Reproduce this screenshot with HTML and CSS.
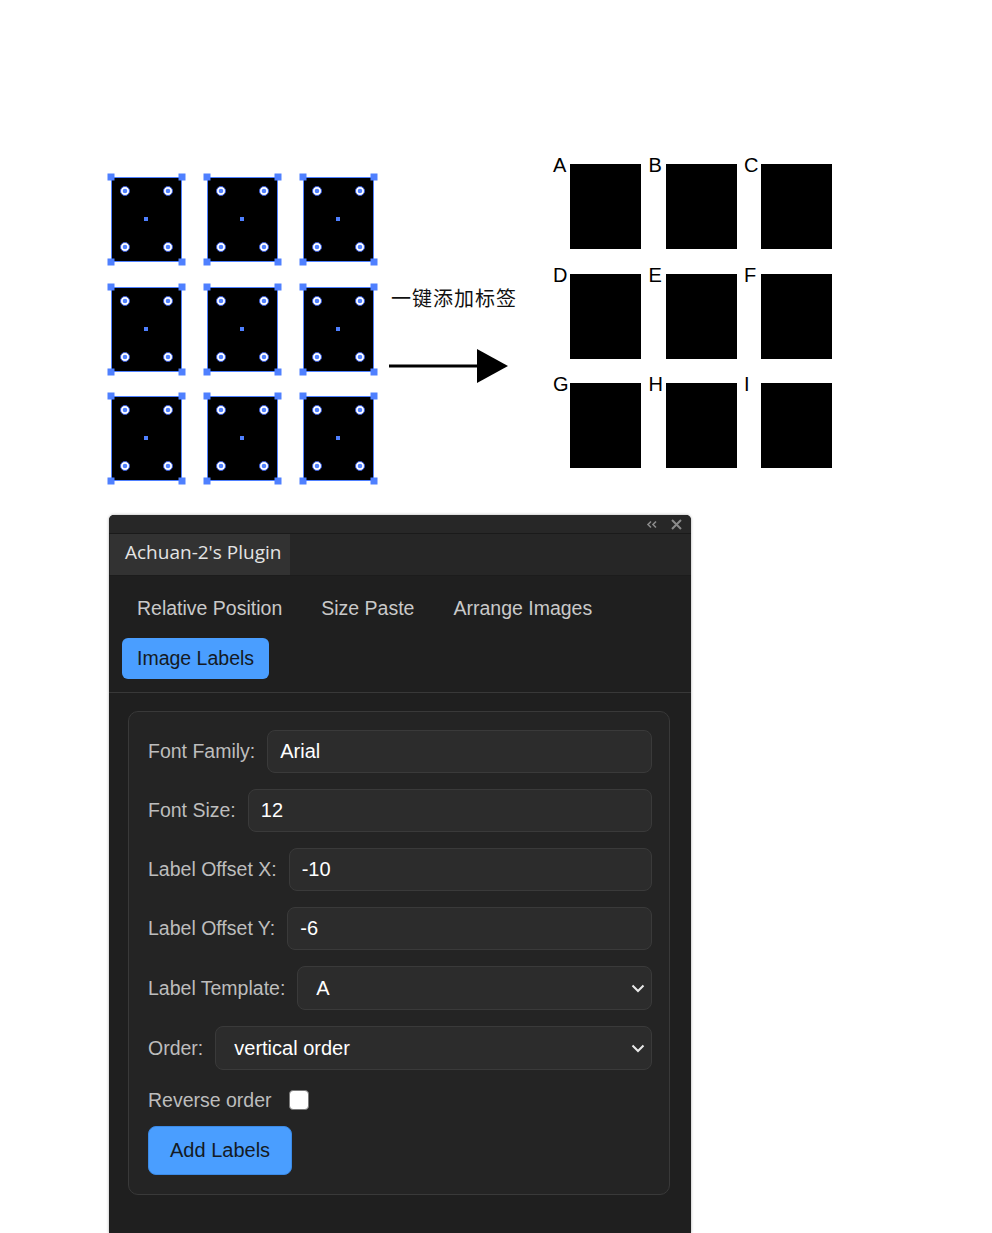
FILE: index.html
```html
<!DOCTYPE html>
<html lang="en">
<head>
<meta charset="utf-8">
<title>Achuan-2's Plugin – Image Labels</title>
<link rel="stylesheet" href="styles.css">
</head>
<body>
<svg class="defs" width="0" height="0" aria-hidden="true">
  <defs>
    <g id="selItem">
      <rect x="0.5" y="0.5" width="70" height="84" fill="#000" stroke="#4f80ff" stroke-width="1"/>
      <rect x="-3.5" y="-3.5" width="7" height="7" fill="#4f80ff"/>
      <rect x="67.5" y="-3.5" width="7" height="7" fill="#4f80ff"/>
      <rect x="-3.5" y="81.5" width="7" height="7" fill="#4f80ff"/>
      <rect x="67.5" y="81.5" width="7" height="7" fill="#4f80ff"/>
      <circle cx="14" cy="14" r="4.5" fill="#fff" stroke="#3557d6" stroke-width="1"/>
      <circle cx="57" cy="14" r="4.5" fill="#fff" stroke="#3557d6" stroke-width="1"/>
      <circle cx="14" cy="70" r="4.5" fill="#fff" stroke="#3557d6" stroke-width="1"/>
      <circle cx="57" cy="70" r="4.5" fill="#fff" stroke="#3557d6" stroke-width="1"/>
      <circle cx="14" cy="14" r="2.3" fill="#4f80ff"/>
      <circle cx="57" cy="14" r="2.3" fill="#4f80ff"/>
      <circle cx="14" cy="70" r="2.3" fill="#4f80ff"/>
      <circle cx="57" cy="70" r="2.3" fill="#4f80ff"/>
      <rect x="33" y="40" width="4" height="4" fill="#4f80ff"/>
    </g>
  </defs>
</svg>

<div class="stage">
  <div class="src-grid">
    <svg class="sel" width="71" height="85" viewBox="0 0 71 85"><use href="#selItem"/></svg>
    <svg class="sel" width="71" height="85" viewBox="0 0 71 85"><use href="#selItem"/></svg>
    <svg class="sel" width="71" height="85" viewBox="0 0 71 85"><use href="#selItem"/></svg>
    <svg class="sel" width="71" height="85" viewBox="0 0 71 85"><use href="#selItem"/></svg>
    <svg class="sel" width="71" height="85" viewBox="0 0 71 85"><use href="#selItem"/></svg>
    <svg class="sel" width="71" height="85" viewBox="0 0 71 85"><use href="#selItem"/></svg>
    <svg class="sel" width="71" height="85" viewBox="0 0 71 85"><use href="#selItem"/></svg>
    <svg class="sel" width="71" height="85" viewBox="0 0 71 85"><use href="#selItem"/></svg>
    <svg class="sel" width="71" height="85" viewBox="0 0 71 85"><use href="#selItem"/></svg>
  </div>

  <div class="mid">
    <div class="mid-text">一键添加标签</div>
    <svg class="arrow" width="120" height="36" viewBox="0 0 120 36">
      <rect x="0" y="16.5" width="92" height="3" fill="#000"/>
      <polygon points="88,1 119,18 88,35" fill="#000"/>
    </svg>
  </div>

  <div class="out-grid">
    <div class="cell"><span class="cell-label">A</span></div>
    <div class="cell"><span class="cell-label">B</span></div>
    <div class="cell"><span class="cell-label">C</span></div>
    <div class="cell"><span class="cell-label">D</span></div>
    <div class="cell"><span class="cell-label">E</span></div>
    <div class="cell"><span class="cell-label">F</span></div>
    <div class="cell"><span class="cell-label">G</span></div>
    <div class="cell"><span class="cell-label">H</span></div>
    <div class="cell"><span class="cell-label">I</span></div>
  </div>
</div>

<div class="panel-wrap">
  <div class="panel">
    <div class="titlebar">
      <svg class="tb-icon" width="12" height="9" viewBox="0 0 12 9">
        <path d="M5 1.5 L2 4.5 L5 7.5 M10 1.5 L7 4.5 L10 7.5" fill="none" stroke="#8a8a8a" stroke-width="1.6"/>
      </svg>
      <svg class="tb-icon" width="11" height="11" viewBox="0 0 11 11">
        <path d="M1 1 L10 10 M10 1 L1 10" fill="none" stroke="#8a8a8a" stroke-width="2"/>
      </svg>
    </div>
    <div class="tabbar">
      <div class="tab">Achuan-2's Plugin</div>
    </div>
    <div class="nav">
      <button class="nav-btn">Relative Position</button>
      <button class="nav-btn">Size Paste</button>
      <button class="nav-btn">Arrange Images</button>
      <button class="nav-btn active">Image Labels</button>
    </div>
    <div class="content">
      <div class="card">
        <div class="row">
          <label class="lbl">Font Family:</label>
          <input class="field" type="text" value="Arial">
        </div>
        <div class="row">
          <label class="lbl">Font Size:</label>
          <input class="field" type="text" value="12">
        </div>
        <div class="row">
          <label class="lbl">Label Offset X:</label>
          <input class="field" type="text" value="-10">
        </div>
        <div class="row">
          <label class="lbl">Label Offset Y:</label>
          <input class="field" type="text" value="-6">
        </div>
        <div class="row">
          <label class="lbl">Label Template:</label>
          <div class="select-wrap">
            <select class="field select"><option>A</option></select>
            <svg class="chev" width="14" height="9" viewBox="0 0 14 9"><path d="M1.5 1.5 L7 7 L12.5 1.5" fill="none" stroke="#e8e8e8" stroke-width="2"/></svg>
          </div>
        </div>
        <div class="row">
          <label class="lbl">Order:</label>
          <div class="select-wrap">
            <select class="field select"><option>vertical order</option></select>
            <svg class="chev" width="14" height="9" viewBox="0 0 14 9"><path d="M1.5 1.5 L7 7 L12.5 1.5" fill="none" stroke="#e8e8e8" stroke-width="2"/></svg>
          </div>
        </div>
        <div class="row row-check">
          <label class="lbl">Reverse order</label>
          <input class="check" type="checkbox">
        </div>
        <button class="add-btn">Add Labels</button>
      </div>
    </div>
  </div>
</div>
</body>
</html>
```

FILE: styles.css
```css
html, body {
  margin: 0;
  padding: 0;
}

body {
  height: 1233px;
  overflow: hidden;
  background: #ffffff;
  font-family: "Liberation Sans", Arial, sans-serif;
}

.defs {
  display: block;
  width: 0;
  height: 0;
  overflow: hidden;
}

/* ---------- illustration ---------- */
.stage {
  display: flex;
  align-items: flex-start;
  padding: 164px 0 0 111px;
}

.src-grid {
  display: grid;
  grid-template-columns: repeat(3, 71px);
  grid-auto-rows: 85px;
  column-gap: 25px;
  row-gap: 24.5px;
  margin-top: 13px;
}

.sel {
  display: block;
  overflow: visible;
}

.mid {
  width: 127px;
  margin-left: 15px;
  margin-top: 122px;
}

.mid-text {
  font-family: "Noto Sans CJK SC", sans-serif;
  font-size: 20px;
  line-height: 24px;
  letter-spacing: 1px;
  padding-left: 2px;
  color: #111;
  white-space: nowrap;
}

.arrow {
  display: block;
  margin-top: 38px;
}

.out-grid {
  display: grid;
  grid-template-columns: repeat(3, 71px);
  grid-auto-rows: 85px;
  column-gap: 24.5px;
  row-gap: 24.5px;
  margin-left: 54px;
}

.cell {
  position: relative;
  background: #000;
}

.cell-label {
  position: absolute;
  left: -17px;
  top: -10px;
  font-size: 20px;
  line-height: 23px;
  color: #000;
}

/* ---------- panel ---------- */
.panel-wrap {
  padding: 34px 0 0 109px;
}

.panel {
  width: 582px;
  height: 718px;
  background: #1f1f1f;
  border-radius: 5px 5px 0 0;
  box-shadow: 0 0 3px rgba(0, 0, 0, 0.35);
  overflow: hidden;
}

.titlebar {
  height: 18px;
  background: #272727;
  border-bottom: 1px solid #1a1a1a;
  display: flex;
  justify-content: flex-end;
  align-items: center;
  gap: 13px;
  padding-right: 9px;
}

.tb-icon {
  display: block;
}

.tabbar {
  height: 41px;
  background: #262626;
  border-bottom: 1px solid #1c1c1c;
  display: flex;
  padding-left: 1px;
}

.tab {
  display: flex;
  align-items: center;
  background: #323232;
  padding: 0 9px 6px 15px;
  font-family: "Open Sans", "Noto Sans", sans-serif;
  font-size: 19px;
  color: #e4e4e4;
}

.nav {
  display: flex;
  flex-wrap: wrap;
  gap: 9px;
  padding: 12px 13px 13px;
  border-bottom: 1px solid #383838;
}

.nav-btn {
  height: 41px;
  padding: 0 15px;
  border: none;
  border-radius: 6px;
  background: transparent;
  color: #c9c9c9;
  font-family: "Liberation Sans", Arial, sans-serif;
  font-size: 19.5px;
  cursor: pointer;
}

.nav-btn.active {
  background: #4a9eff;
  color: #141a24;
}

.content {
  padding: 18px 21px 0 19px;
}

.card {
  border: 1px solid #393939;
  border-radius: 10px;
  background: #242424;
  padding: 18px 17px 19px 19px;
}

.row {
  display: flex;
  align-items: center;
  gap: 12px;
  margin-bottom: 16px;
}

.lbl {
  font-size: 19.5px;
  color: #bdbdbd;
  white-space: nowrap;
}

.field {
  flex: 1;
  min-width: 0;
  height: 43px;
  box-sizing: border-box;
  background: #2c2c2c;
  border: 1px solid #3a3a3a;
  border-radius: 8px;
  color: #ffffff;
  font-family: "Liberation Sans", Arial, sans-serif;
  font-size: 20px;
  padding: 0 12px;
  outline: none;
}

.select-wrap {
  position: relative;
  flex: 1;
  display: flex;
}

.select {
  height: 44px;
  padding-left: 18px;
  -webkit-appearance: none;
  appearance: none;
}

.chev {
  position: absolute;
  right: 7px;
  top: 18px;
  pointer-events: none;
}

.row-check {
  height: 28px;
  gap: 17px;
  margin-bottom: 12px;
}

.check {
  -webkit-appearance: none;
  appearance: none;
  width: 20px;
  height: 20px;
  margin: 0;
  background: #ffffff;
  border: 1px solid #7a7a7a;
  border-radius: 4px;
}

.add-btn {
  display: block;
  height: 49px;
  padding: 0 21px;
  background: #4a9eff;
  border: 1px solid #3b8ae6;
  border-radius: 8px;
  color: #141a24;
  font-family: "Liberation Sans", Arial, sans-serif;
  font-size: 20px;
  cursor: pointer;
}
```
